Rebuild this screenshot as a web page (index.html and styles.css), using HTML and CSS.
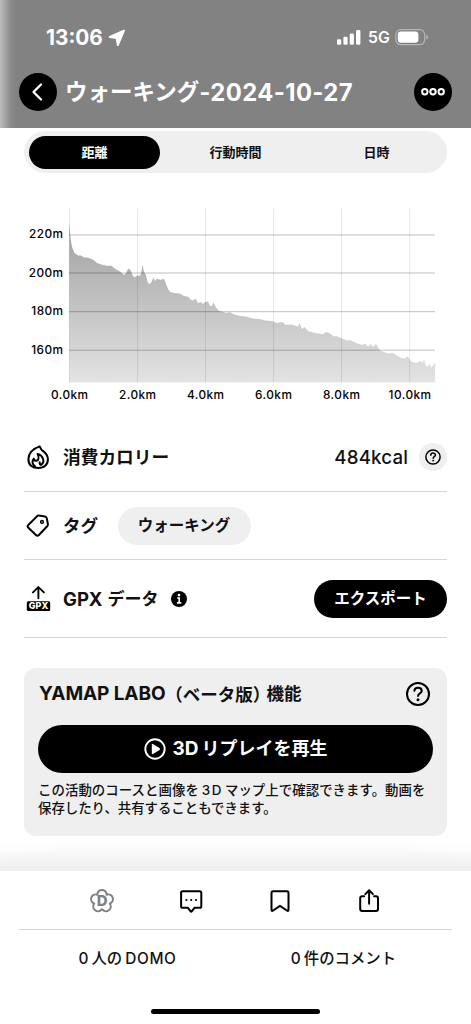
FILE: index.html
```html
<!DOCTYPE html>
<html lang="ja">
<head>
<meta charset="utf-8">
<meta name="viewport" content="width=device-width, initial-scale=1">
<title>ウォーキング-2024-10-27</title>
<link rel="stylesheet" href="styles.css">
</head>
<body>
<header class="header">
  <div class="status">
    <span class="time">13:06</span>
    <svg class="location" width="18" height="18" viewBox="0 0 18 18"><path d="M16 1.6 L1.7 7.9 L8.7 9.1 L9.8 16 Z" fill="#fff" stroke="#fff" stroke-width="2" stroke-linejoin="round"/></svg>
    <svg class="signal" width="24" height="15" viewBox="0 0 24 15" fill="#fff"><rect x="0" y="9.3" width="4.2" height="5.5" rx="1.3"/><rect x="6.4" y="6.8" width="4.2" height="8" rx="1.3"/><rect x="12.7" y="3.6" width="4.2" height="11.2" rx="1.3"/><rect x="19" y="0" width="4.4" height="14.8" rx="1.4"/></svg>
    <span class="network">5G</span>
    <svg class="battery" width="34" height="17" viewBox="0 0 34 17"><rect x=".9" y=".7" width="28.7" height="15" rx="4.8" fill="none" stroke="#b4b4b4" stroke-width="1.2"/><rect x="2.8" y="2.6" width="20.6" height="11.2" rx="3.2" fill="#fff"/><path d="M31.2 5.8 Q33.2 6.6 33.2 8.2 Q33.2 9.8 31.2 10.6Z" fill="#b4b4b4"/></svg>
  </div>
  <div class="titlebar">
    <button class="round" aria-label="戻る"><svg width="38" height="38" viewBox="0 0 38 38"><path d="M22 11.5 L14.5 19 L22 26.5" fill="none" stroke="#fff" stroke-width="2.3" stroke-linecap="round" stroke-linejoin="round"/></svg></button>
    <h1 class="title"><span class="title-kana">ウォーキング</span><span class="title-date">-2024-10-27</span></h1>
    <button class="round" aria-label="メニュー"><svg width="38" height="38" viewBox="0 0 38 38" fill="none" stroke="#fff" stroke-width="2"><circle cx="10.8" cy="18.7" r="2.7"/><circle cx="19" cy="18.7" r="2.7"/><circle cx="27.2" cy="18.7" r="2.7"/></svg></button>
  </div>
</header>
<main class="content">
  <nav class="tabs"><span class="tab tab-active">距離</span><span class="tab">行動時間</span><span class="tab">日時</span></nav>
  <svg class="chart" width="471" height="210" viewBox="0 200 471 210">
    <defs><linearGradient id="terrain" gradientUnits="userSpaceOnUse" x1="0" y1="224" x2="0" y2="382"><stop offset="0" stop-color="#a0a0a0"/><stop offset="1" stop-color="#e3e3e3"/></linearGradient></defs>
    <path fill="url(#terrain)" d="M69.3 382.5 V222 L70.5 238 L72 247 L74.5 253 L78 255.5 L81 255.6 L84 257.6 L88 257.6 L91 259 L93 259.5 L97 263 L103 265 L106 265.5 L108 266 L111 265.6 L115 268.8 L120 271.5 L124 275 L126 273 L128 269 L129.4 268.7 L131 271 L133 276 L135 277.5 L137 275.5 L140 275.8 L141.2 273 L142.5 264.5 L144 272 L146 275 L147.5 282 L149.5 284.3 L151.5 282 L153.4 277.5 L155 281 L157 278.8 L161 280 L163 278.6 L164.5 280 L168 289 L170 291.8 L174 293 L180 293.5 L184 296 L188 296.8 L191 300 L193 300.4 L195.5 298.5 L198 303 L201 302 L203 304 L205 302 L208 301.5 L210 306 L212 306 L213.5 302.5 L216 307.5 L219 311 L222 311.6 L226 313 L230 312.3 L233 314 L236 315 L241 316 L246 316.5 L249 317.5 L253 318.6 L260 319 L265 320.5 L272 321 L277 323 L282 322 L286 325 L291 324.5 L298 326.6 L299.6 323.5 L302 329 L304.5 327 L308 331 L313 332.5 L323 334.2 L326 332 L329 333 L334 336.5 L336 336 L341 338 L347 340.5 L351 340.2 L356 343 L362 345 L365 343.5 L367 346 L369 346 L370.5 344 L373 347 L376 344 L380 350.5 L388 353.5 L393 353 L401 358 L405 358.5 L407.5 356 L411 361.5 L416 363 L421 361 L422.5 363 L424 359.5 L426 366 L428 366.5 L429.5 364 L431.5 367.5 L435 362.5 V382.5Z"/>
    <g stroke="#000"><path stroke-opacity=".25" d="M69 235H435M69 273H435M69 311.7H435M69 350.2H435"/><path stroke-opacity=".09" d="M69.5 208.5V382.5M137.5 208.5V382.5M205.5 208.5V382.5M273.5 208.5V382.5M341.5 208.5V382.5M409.7 208.5V382.5"/></g>
    <g class="axis" text-anchor="end"><text x="63.5" y="238">220m</text><text x="63.5" y="276.6">200m</text><text x="63.5" y="315.2">180m</text><text x="63.5" y="353.6">160m</text></g>
    <g class="axis" text-anchor="middle"><text x="69.7" y="399">0.0km</text><text x="137.7" y="399">2.0km</text><text x="205.7" y="399">4.0km</text><text x="273.7" y="399">6.0km</text><text x="341.7" y="399">8.0km</text><text x="410" y="399">10.0km</text></g>
  </svg>
  <section class="details">
    <div class="row calories">
      <svg class="row-icon" width="28" height="28" viewBox="0 0 28 28" fill="none" stroke="#000" stroke-linecap="round" stroke-linejoin="round"><path stroke-width="2" d="M15.6 3.4 C9.3 5.6 4.7 10.1 4.4 16 C4.1 21.7 8.3 25 14.3 25 C20.3 25 24.2 21.4 23.9 15.8 C23.6 11.1 20.5 9.1 18.1 7.3 C16.6 6.1 16.7 4.4 15.6 3.4Z"/><path stroke-width="2" d="M11.2 23.6 C7.8 21.3 7.8 17.6 9.8 15.6 C10 18.3 13.6 18.7 14.4 16 C14.9 14.3 14.6 12.6 13.6 10.9 C18.9 12.4 21.6 18.6 17 22 C15.6 21.2 15.4 20.2 15.7 19.2"/></svg>
      <span class="label label-cal">消費カロリー</span>
      <span class="energy">484kcal</span>
      <span class="help"><svg width="28" height="28" viewBox="0 0 28 28" fill="none" stroke="#000"><circle cx="14" cy="14" r="7.1" stroke-width="1.5"/><path stroke-width="1.5" stroke-linecap="round" d="M11.8 12.2 C11.8 9.4 16.4 9.4 16.4 12.1 C16.4 13.7 14.2 13.7 14.2 15.3"/><circle cx="14.2" cy="17.6" r=".95" fill="#000" stroke="none"/></svg></span>
    </div>
    <div class="row tags">
      <svg class="row-icon" width="28" height="28" viewBox="0 0 28 28" fill="none" stroke="#000" stroke-width="2" stroke-linejoin="round"><path d="M13.2 4.1 Q14 3.4 15 3.6 L20.9 4.6 Q22.6 4.9 22.9 6.7 L23.9 12.2 Q24.1 13.4 23.2 14.3 L14.9 23 Q13.4 24.5 11.9 23 L4.4 15.8 Q2.8 14.4 4.3 13Z"/><circle cx="18" cy="9.9" r="1.5" fill="#777" stroke-width="1.2"/></svg>
      <span class="label label-tag">タグ</span>
      <span class="chip">ウォーキング</span>
    </div>
    <div class="row gpx">
      <svg class="row-icon" width="28" height="28" viewBox="0 0 28 28"><path d="M14.4 13.2 V2.8 M8.9 7.4 L14.4 2.1 L19.9 7.4" fill="none" stroke="#000" stroke-width="1.9" stroke-linecap="round" stroke-linejoin="round"/><rect x="2.8" y="16.3" width="23.4" height="9.7" rx="1.6"/><text class="gpx-mark" x="14.5" y="24.3" text-anchor="middle" textLength="19.5" lengthAdjust="spacingAndGlyphs">GPX</text></svg>
      <span class="label label-gpx"><b class="latin">GPX</b><span>データ</span></span>
      <svg class="info" width="18" height="18" viewBox="0 0 18 18"><circle cx="9" cy="9" r="8"/><circle cx="9" cy="5.1" r="1.35" fill="#fff"/><path d="M7.2 8 H9.2 V12.6 M7 12.9 H11.3" stroke="#fff" stroke-width="1.6" fill="none"/></svg>
      <button class="export">エクスポート</button>
    </div>
  </section>
  <section class="card">
    <div class="card-head"><h2 class="card-title"><span class="brand">YAMAP LABO</span><span class="beta">（ベータ版）</span><span class="feature">機能</span></h2>
      <svg width="26" height="26" viewBox="0 0 26 26" fill="none" stroke="#000" stroke-width="2"><circle cx="13" cy="13" r="11"/><path stroke-linecap="round" d="M9.4 9.8 C9.6 5.8 16.7 5.9 16.7 9.9 C16.7 12.5 13 12.3 13 15"/><circle cx="13" cy="18.7" r="1.5" fill="#000" stroke="none"/></svg></div>
    <button class="replay"><svg width="22" height="22" viewBox="0 0 22 22"><circle cx="11" cy="11" r="9.7" fill="none" stroke="#fff" stroke-width="1.9"/><path d="M7.8 6.6 Q7.8 5.4 8.9 6 L15.5 10.1 Q16.6 11 15.5 11.9 L8.9 16 Q7.8 16.6 7.8 15.4Z" fill="#fff"/></svg><span class="replay-text"><span class="three-d">3D</span><span>リプレイを再生</span></span></button>
    <p class="note"><span class="note-line1">この活動のコースと画像を<span class="note-latin">3D</span>マップ上で確認できます。動画を</span><br><span class="note-line2">保存したり、共有することもできます。</span></p>
  </section>
</main>
<div class="fade"></div>
<footer class="footer">
  <div class="actions">
    <svg width="28" height="28" viewBox="0 0 28 28"><path d="M9.3 7.7 C9.2 1.5 18.8 1.5 18.7 7.7 C24.6 5.8 27.7 14.2 21.8 16.5 C25.5 21.8 18.1 27.4 14 22.2 C9.9 27.4 2.5 21.8 6.2 16.5 C.3 14.2 3.4 5.8 9.3 7.7Z" fill="none" stroke="#808080" stroke-width="2" stroke-linejoin="round"/><text class="domo-mark" x="14.2" y="19.4" text-anchor="middle">D</text></svg>
    <svg width="28" height="28" viewBox="0 0 28 28"><path d="M5.5 4.2 H22.7 Q24.3 4.2 24.3 5.8 V19.2 Q24.3 20.8 22.7 20.8 H17.5 L14.9 24.2 Q14.2 25.1 13.5 24.2 L10.9 20.8 H5.7 Q4.1 20.8 4.1 19.2 V5.8 Q4.1 4.2 5.7 4.2Z" fill="none" stroke="#000" stroke-width="2" stroke-linejoin="round"/><circle cx="9.4" cy="13" r="1.1"/><circle cx="14.2" cy="13" r="1.1"/><circle cx="19" cy="13" r="1.1"/></svg>
    <svg width="28" height="28" viewBox="0 0 28 28"><path d="M7.1 4.2 H21 Q22.5 4.2 22.5 5.7 V22.7 Q22.5 24.6 20.9 23.5 L14 18.9 L7.1 23.5 Q5.5 24.6 5.5 22.7 V5.7 Q5.5 4.2 7.1 4.2Z" fill="none" stroke="#000" stroke-width="2" stroke-linejoin="round"/></svg>
    <svg width="28" height="28" viewBox="0 0 28 28" fill="none" stroke="#000" stroke-width="2" stroke-linecap="round" stroke-linejoin="round"><path d="M9.1 9.3 H7.2 Q5.2 9.3 5.2 11.3 V22 Q5.2 24 7.2 24 H21 Q23 24 23 22 V11.3 Q23 9.3 21 9.3 H19.1 M14.1 16.8 V3.8 M10.3 7.1 L14.1 3.3 L17.9 7.1"/></svg>
  </div>
  <div class="counts"><span class="count count-domo"><span>0</span><span>人の</span><span class="domo-word">DOMO</span></span><span class="count"><span>0</span><span class="comment-jp">件のコメント</span></span></div>
  <div class="home"></div>
</footer>
</body>
</html>
```

FILE: styles.css
```css
* { box-sizing: border-box; }
body { margin: 0; width: 471px; height: 1024px; overflow: hidden; display: flex; flex-direction: column; background: #fff; color: #111; font-family: Inter, "Noto Sans CJK JP", sans-serif; }
button { border: 0; padding: 0; font: inherit; }
h1, h2, p { margin: 0; }
svg { display: block; flex: none; overflow: visible; }
span { white-space: nowrap; }

.header { height: 128px; flex: none; background: linear-gradient(90deg, #bcbcbc 0, #a4a4a4 5px, #8a8a8a 11px, #828282 17px); color: #fff; }
.status { height: 73px; padding: 0 42px 0 46px; display: flex; align-items: flex-start; }
.time { margin-top: 26px; width: 57px; font-size: 20.8px; line-height: 24px; font-weight: 700; }
.location { margin: 29px 0 0 5px; }
.signal { margin: 30px 0 0 auto; }
.network { margin: 28px 0 0 7px; width: 22px; font-size: 15.8px; line-height: 20px; font-weight: 600; }
.battery { margin: 29px 0 0 5px; }
.titlebar { height: 38px; padding: 0 19px; display: flex; align-items: center; }
.round { width: 38px; height: 38px; border-radius: 50%; background: #000; flex: none; }
.title { margin-left: 8px; flex: 1; display: flex; align-items: center; font-size: 23px; line-height: 38px; font-weight: 700; }
.title-kana { font-size: 22.5px; }
.title-date { font-size: 23.8px; letter-spacing: .4px; padding-top: 1px; }

.content { height: 712px; flex: none; }
.tabs { margin: 3px 24px 0; height: 42px; padding: 0 5px; gap: 10px; border-radius: 21px; background: #efefef; display: flex; align-items: center; }
.tab { flex: 1; height: 33px; border-radius: 17px; text-align: center; font-size: 13px; line-height: 32px; font-weight: 700; }
.tab-active { background: #000; color: #fff; }
.chart { margin-top: 27px; }
.axis { font-size: 11.8px; font-weight: 500; fill: #000; letter-spacing: .45px; }
.details { margin: 13px 24px 0; }
.row { display: flex; align-items: center; border-bottom: 1px solid #d5d5d5; }
.row-icon { margin-right: 11px; }
.label { font-size: 17.7px; line-height: 26px; font-weight: 600; padding-top: 1px; }
.calories { height: 69px; }
.energy { margin-left: auto; font-size: 18.7px; line-height: 24px; font-weight: 500; letter-spacing: .15px; padding-top: 1px; }
.help { margin-left: 11px; width: 28px; height: 28px; border-radius: 50%; background: #efefef; }
.tags { height: 68px; }
.label-tag { width: 36px; font-size: 17.5px; }
.chip { margin-left: 18.5px; width: 133px; height: 38px; border-radius: 19px; background: #efefef; text-align: center; font-size: 15.5px; line-height: 37px; font-weight: 600; }
.gpx { height: 78px; }
.gpx-mark { font-size: 9.5px; font-weight: 800; fill: #fff; }
.label-gpx { display: flex; gap: 5px; font-size: 17px; width: 96px; }
.latin { font-size: 18.5px; font-weight: 700; }
.info { margin-left: 11px; }
.export { margin-left: auto; width: 133px; height: 38px; border-radius: 19px; background: #000; color: #fff; font-size: 15.5px; line-height: 37px; font-weight: 700; }
.card { margin: 30px 24px 0; height: 168px; border-radius: 12px; background: #efefef; padding: 13px 14px; }
.card-head { height: 26px; padding-right: 2px; display: flex; align-items: center; justify-content: space-between; }
.card-title { padding-left: 1px; display: flex; align-items: center; font-size: 17.5px; line-height: 26px; font-weight: 700; }
.brand { width: 128px; font-size: 19px; letter-spacing: -.1px; }
.beta { margin-left: 7px; font-family: "Noto Sans CJK JP", sans-serif; font-feature-settings: "halt"; }
.beta, .feature { flex: none; }
.feature { margin-left: 5px; }
.replay { width: 395px; height: 48px; margin-top: 18px; border-radius: 24px; background: #000; color: #fff; display: flex; align-items: center; justify-content: center; gap: 7px; }
.replay-text { display: flex; align-items: center; gap: 3px; font-size: 18px; line-height: 26px; font-weight: 700; }
.three-d { font-size: 19px; }
.note { margin-top: 9px; font-size: 13.4px; line-height: 17.5px; font-weight: 500; }
.note-line1 { letter-spacing: .07px; }
.note-latin { margin: 0 2px 0 3px; letter-spacing: 1.5px; }

.fade { height: 31px; flex: none; background: radial-gradient(ellipse at center bottom, transparent 70%, #fff 100%), linear-gradient(#fff, #eee); }
.footer { height: 153px; flex: none; background: #fff; }
.actions { height: 59px; margin: 0 19px; padding: 1px 69px 0; border-bottom: 1px solid #d5d5d5; display: flex; align-items: center; justify-content: space-between; }
.domo-mark { font-size: 15px; font-weight: 800; fill: #808080; }
.counts { height: 58px; padding: 0 20px; display: flex; align-items: center; }
.count { flex: 1; display: flex; align-items: center; justify-content: center; gap: 3px; font-size: 15.4px; line-height: 24px; font-weight: 500; }
.count-domo { padding-right: 1px; }
.domo-word { letter-spacing: .65px; }
.home { width: 169px; height: 5px; margin: 21px auto 0; border-radius: 3px; background: #000; }
```
